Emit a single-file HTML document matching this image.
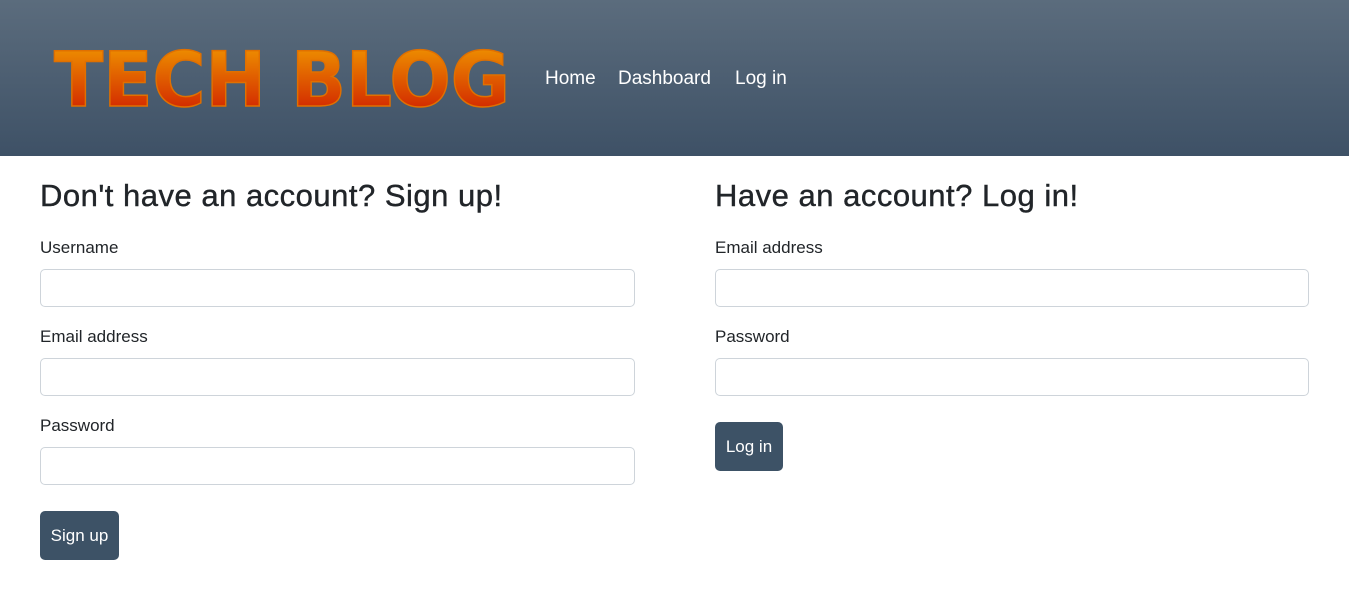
<!DOCTYPE html>
<html><head><style>
body{margin:0;font-family:"Liberation Sans",sans-serif;color:#212529;background:#fff;width:1349px;height:592px;overflow:hidden;position:relative}
header{position:absolute;left:0;top:0;width:1349px;height:156px;background:linear-gradient(#5b6c7d,#3e5166)}
nav a{position:absolute;top:68px;color:#fff;font-size:19px;text-decoration:none}
h2{position:absolute;margin:0;font-size:31px;font-weight:normal;top:178px;letter-spacing:0.5px;-webkit-text-stroke:0.4px #212529}
.l{position:absolute;font-size:17px}
.i{position:absolute;width:593px;height:36px;border:1px solid #ced4da;border-radius:5px}
.b{position:absolute;background:#3d5266;color:#fff;font-size:17px;border-radius:5px;height:49px;line-height:49px;text-align:center}
</style></head><body>
<header>
<svg width="1349" height="156" style="position:absolute;left:0;top:0">
<defs><linearGradient id="g" x1="0" y1="0" x2="0" y2="1"><stop offset="0" stop-color="#f3a300"/><stop offset="1" stop-color="#cc1100"/></linearGradient></defs>
<text x="54" y="106" font-family="DejaVu Sans" font-weight="bold" font-size="76" textLength="456" lengthAdjust="spacingAndGlyphs" fill="url(#g)" stroke="#e07000" stroke-width="1.5">TECH BLOG</text>
</svg>
<nav><a style="left:545px">Home</a><a style="left:618px">Dashboard</a><a style="left:735px">Log in</a></nav>
</header>
<h2 style="left:40px">Don't have an account? Sign up!</h2>
<div class="l" style="left:40px;top:238px">Username</div>
<div class="i" style="left:40px;top:269px"></div>
<div class="l" style="left:40px;top:327px">Email address</div>
<div class="i" style="left:40px;top:358px"></div>
<div class="l" style="left:40px;top:416px">Password</div>
<div class="i" style="left:40px;top:447px"></div>
<div class="b" style="left:40px;top:511px;width:79px">Sign up</div>
<h2 style="left:715px">Have an account? Log in!</h2>
<div class="l" style="left:715px;top:238px">Email address</div>
<div class="i" style="left:715px;top:269px;width:592px"></div>
<div class="l" style="left:715px;top:327px">Password</div>
<div class="i" style="left:715px;top:358px;width:592px"></div>
<div class="b" style="left:715px;top:422px;width:68px">Log in</div>
</body></html>
